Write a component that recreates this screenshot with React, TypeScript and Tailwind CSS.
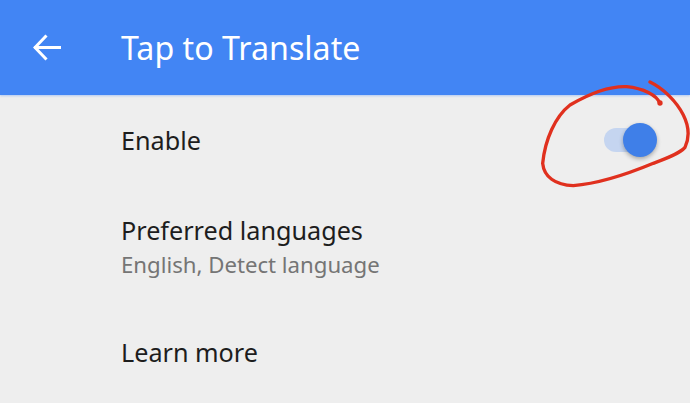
const font = "font-['Noto_Sans',sans-serif]"

function Row({ title, sub, className }: { title: string; sub?: string; className?: string }) {
  return (
    <div className={`pl-[121px] ${className ?? ''}`}>
      <p className="text-[25.2px] leading-[30px] text-[#1d1d1d]">{title}</p>
      {sub && <p className="mt-[7px] text-[22.2px] leading-[26px] text-[#757575]">{sub}</p>}
    </div>
  )
}

export default function App() {
  return (
    <div className={`${font} relative h-[403px] w-[690px] overflow-hidden bg-[#eeeeee]`}>
      <header className="flex h-[95px] items-center bg-[#4285f4] pl-[33px] shadow-[0_1px_2px_rgba(66,133,244,0.35)]">
        <svg width="28" height="27" viewBox="0 0 28 27" fill="none" stroke="#fff" strokeWidth="3">
          <path d="M1 13.5h27M13.5 1.5 2 13.5l11.5 12" />
        </svg>
        <h1 className="ml-[60px] pt-[1px] text-[32.2px] text-white">Tap to Translate</h1>
      </header>
      <div className="flex items-center justify-between pt-[30px] pr-[40px]">
        <Row title="Enable" />
        <div className="relative h-[24px] w-[46px] rounded-full bg-[#c5d5f0]">
          <span className="absolute right-[-7px] top-[-5px] h-[34px] w-[34px] rounded-full bg-[#3f7fe8] shadow-[0_2px_4px_rgba(0,0,0,0.3)]" />
        </div>
      </div>
      <Row title="Preferred languages" sub="English, Detect language" className="mt-[60px]" />
      <Row title="Learn more" className="mt-[59px]" />
      <svg className="absolute left-[520px] top-[60px]" width="170" height="140" viewBox="0 0 510 420" fill="none" stroke="#e0301e" strokeWidth="10" strokeLinecap="round" strokeLinejoin="round">
        <path d="M420 130C410 105 370 85 320 80 270 78 210 100 150 135 105 170 75 240 68 310 72 350 105 375 160 377 250 370 340 335 400 310 440 295 480 280 495 262 510 230 505 195 490 165 470 125 430 85 390 66" />
        <circle cx="420" cy="129" r="8" fill="#e0301e" stroke="none" />
      </svg>
    </div>
  )
}
